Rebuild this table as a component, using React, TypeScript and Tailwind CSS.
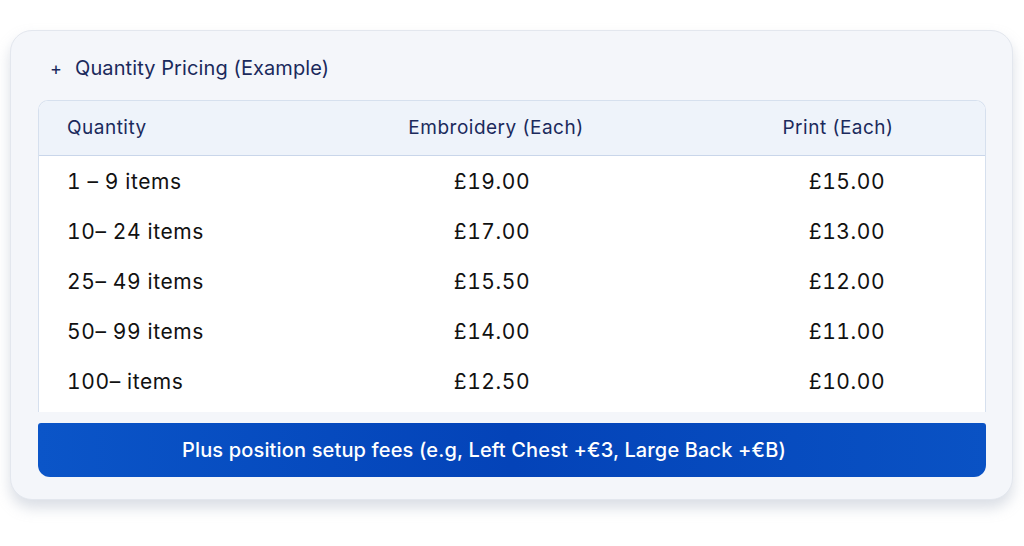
import React from "react";

const rows = [
  ["1 – 9 items", "£19.00", "£15.00"],
  ["10– 24 items", "£17.00", "£13.00"],
  ["25– 49 items", "£15.50", "£12.00"],
  ["50– 99 items", "£14.00", "£11.00"],
  ["100– items", "£12.50", "£10.00"],
];

export default function App() {
  return (
    <div className="w-[1024px] h-[546px] bg-white pt-[30px] pl-[10px] pr-[11px]" style={{ fontFamily: "Inter, 'Noto Sans', sans-serif" }}>
      <div className="h-[470px] rounded-[22px] bg-[#f4f6fa] border border-[#e3e7ee] shadow-[0_8px_14px_rgba(150,160,180,0.35)] px-[27px] pt-[22px]">
        <div className="flex items-center h-[30px] text-[#1b2a5c] text-[20px]">
          <span className="ml-[12px] w-[25px] text-[18px]">+</span>
          <span className="tracking-[0.1px]">Quantity Pricing (Example)</span>
        </div>
        <div className="mt-[17px] w-[948px] rounded-t-[10px] border border-[#d6e0ee] border-b-0 bg-white overflow-hidden">
          <div className="grid grid-cols-[238px_430px_280px] h-[55px] items-center bg-[#eef3fa] border-b border-[#c9d6ea] text-[#1b2a5c] text-[19px] tracking-[0.5px]">
            <div className="pl-[28px]">Quantity</div>
            <div className="text-center pl-[8px]">Embroidery (Each)</div>
            <div className="text-center pr-[18px]">Print (Each)</div>
          </div>
          <div className="pt-[1px]">
            {rows.map((r, i) => (
              <div key={i} className="grid grid-cols-[238px_430px_280px] h-[50px] items-center text-[#111] text-[21px] tabular-nums tracking-[0.6px]">
                <div className="pl-[28px]">{r[0]}</div>
                <div className="text-center">{r[1]}</div>
                <div className="text-center">{r[2]}</div>
              </div>
            ))}
          </div>
          <div className="h-[5px]" />
        </div>
        <div className="mt-[11px] w-[948px] h-[54px] rounded-b-[12px] rounded-t-[3px] bg-gradient-to-r from-[#0b55c8] via-[#0443b8] to-[#0a52c4] flex items-center justify-center pr-[56px] text-white text-[20px] font-medium tracking-[0.15px]">
          Plus position setup fees (e.g, Left Chest +€3, Large Back +€B)
        </div>
      </div>
    </div>
  );
}
